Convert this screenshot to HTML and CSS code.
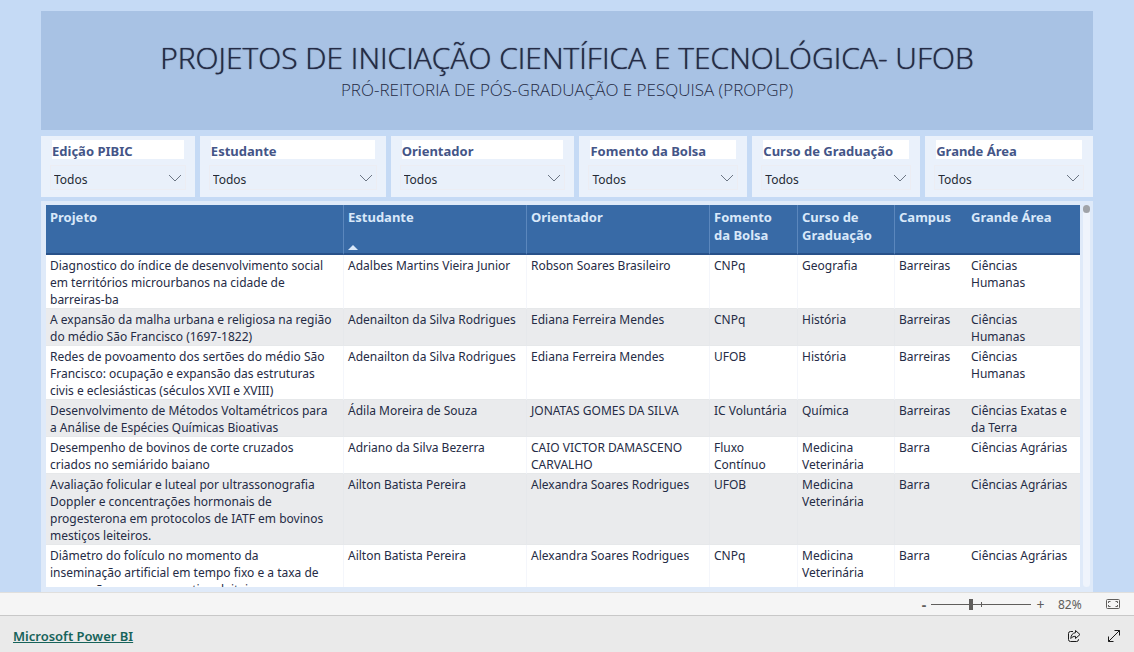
FILE: index.html
```html
<!DOCTYPE html>
<html lang="pt-BR">
<head>
<meta charset="utf-8">
<title>Projetos de Iniciação Científica e Tecnológica - UFOB</title>
<link rel="stylesheet" href="styles.css">
</head>
<body>
<main class="report">
  <header class="banner">
    <h1 class="banner-title">PROJETOS DE INICIAÇÃO CIENTÍFICA E TECNOLÓGICA- UFOB</h1>
    <p class="banner-subtitle">PRÓ-REITORIA DE PÓS-GRADUAÇÃO E PESQUISA (PROPGP)</p>
  </header>

  <section class="slicers">
    <div class="slicer slicer-edicao">
      <label class="slicer-label" for="f-edicao">Edição PIBIC</label>
      <div class="slicer-field"><select class="slicer-select" id="f-edicao"><option>Todos</option></select><svg class="chevron" viewBox="0 0 14 8"><path d="M1 1l6 6 6-6"/></svg></div>
    </div>
    <div class="slicer slicer-estudante">
      <label class="slicer-label" for="f-estudante">Estudante</label>
      <div class="slicer-field"><select class="slicer-select" id="f-estudante"><option>Todos</option></select><svg class="chevron" viewBox="0 0 14 8"><path d="M1 1l6 6 6-6"/></svg></div>
    </div>
    <div class="slicer slicer-orientador">
      <label class="slicer-label" for="f-orientador">Orientador</label>
      <div class="slicer-field"><select class="slicer-select" id="f-orientador"><option>Todos</option></select><svg class="chevron" viewBox="0 0 14 8"><path d="M1 1l6 6 6-6"/></svg></div>
    </div>
    <div class="slicer slicer-fomento">
      <label class="slicer-label" for="f-fomento">Fomento da Bolsa</label>
      <div class="slicer-field"><select class="slicer-select" id="f-fomento"><option>Todos</option></select><svg class="chevron" viewBox="0 0 14 8"><path d="M1 1l6 6 6-6"/></svg></div>
    </div>
    <div class="slicer slicer-curso">
      <label class="slicer-label" for="f-curso">Curso de Graduação</label>
      <div class="slicer-field"><select class="slicer-select" id="f-curso"><option>Todos</option></select><svg class="chevron" viewBox="0 0 14 8"><path d="M1 1l6 6 6-6"/></svg></div>
    </div>
    <div class="slicer slicer-area">
      <label class="slicer-label" for="f-area">Grande Área</label>
      <div class="slicer-field"><select class="slicer-select" id="f-area"><option>Todos</option></select><svg class="chevron" viewBox="0 0 14 8"><path d="M1 1l6 6 6-6"/></svg></div>
    </div>
  </section>

  <section class="table-panel">
    <div class="table-scroll">
      <table class="projects">
        <colgroup>
          <col class="col-projeto"><col class="col-pessoa"><col class="col-pessoa"><col class="col-fomento"><col class="col-curso"><col class="col-campus"><col class="col-area">
        </colgroup>
        <thead>
          <tr>
            <th>Projeto</th>
            <th aria-sort="ascending"><div class="sorted">Estudante<svg class="sort-arrow" viewBox="0 0 10 5"><path d="M0 5l5-5 5 5z"/></svg></div></th>
            <th>Orientador</th>
            <th>Fomento<br>da Bolsa</th>
            <th>Curso de Graduação</th>
            <th>Campus</th>
            <th>Grande Área</th>
          </tr>
        </thead>
        <tbody>
          <tr><td>Diagnostico do índice de desenvolvimento social<br>em territórios microurbanos na cidade de<br>barreiras-ba</td><td>Adalbes Martins Vieira Junior</td><td>Robson Soares Brasileiro</td><td>CNPq</td><td>Geografia</td><td>Barreiras</td><td>Ciências<br>Humanas</td></tr>
          <tr><td>A expansão da malha urbana e religiosa na região<br>do médio São Francisco (1697-1822)</td><td>Adenailton da Silva Rodrigues</td><td>Ediana Ferreira Mendes</td><td>CNPq</td><td>História</td><td>Barreiras</td><td>Ciências<br>Humanas</td></tr>
          <tr><td>Redes de povoamento dos sertões do médio São<br>Francisco: ocupação e expansão das estruturas<br>civis e eclesiásticas (séculos XVII e XVIII)</td><td>Adenailton da Silva Rodrigues</td><td>Ediana Ferreira Mendes</td><td>UFOB</td><td>História</td><td>Barreiras</td><td>Ciências<br>Humanas</td></tr>
          <tr><td>Desenvolvimento de Métodos Voltamétricos para<br>a Análise de Espécies Químicas Bioativas</td><td>Ádila Moreira de Souza</td><td>JONATAS GOMES DA SILVA</td><td>IC Voluntária</td><td>Química</td><td>Barreiras</td><td>Ciências Exatas e<br>da Terra</td></tr>
          <tr><td>Desempenho de bovinos de corte cruzados<br>criados no semiárido baiano</td><td>Adriano da Silva Bezerra</td><td>CAIO VICTOR DAMASCENO<br>CARVALHO</td><td>Fluxo<br>Contínuo</td><td>Medicina<br>Veterinária</td><td>Barra</td><td>Ciências Agrárias</td></tr>
          <tr><td>Avaliação folicular e luteal por ultrassonografia<br>Doppler e concentrações hormonais de<br>progesterona em protocolos de IATF em bovinos<br>mestiços leiteiros.</td><td>Ailton Batista Pereira</td><td>Alexandra Soares Rodrigues</td><td>UFOB</td><td>Medicina<br>Veterinária</td><td>Barra</td><td>Ciências Agrárias</td></tr>
          <tr><td>Diâmetro do folículo no momento da<br>inseminação artificial em tempo fixo e a taxa de<br>concepção em vacas mestiças leiteiras</td><td>Ailton Batista Pereira</td><td>Alexandra Soares Rodrigues</td><td>CNPq</td><td>Medicina<br>Veterinária</td><td>Barra</td><td>Ciências Agrárias</td></tr>
        </tbody>
      </table>
    </div>
    <div class="scroll-track"><div class="scroll-thumb"></div></div>
  </section>
</main>

<div class="zoom-bar">
  <button class="zoom-button zoom-out" aria-label="Reduzir">-</button>
  <input class="zoom-range" type="range" min="0" max="100" value="40" aria-label="Zoom">
  <button class="zoom-button zoom-in" aria-label="Ampliar">+</button>
  <span class="zoom-value">82%</span>
  <button class="icon-button" aria-label="Ajustar à página"><svg class="icon-fit" viewBox="0 0 14 10"><rect x=".5" y=".5" width="13" height="9" rx="1"/><path d="M4.500 2.500h-2v1.500M2.500 6v1.500h2M9.500 2.500h2v1.500M11.500 6v1.500h-2"/></svg></button>
</div>
<footer class="footer">
  <a class="brand" href="#">Microsoft Power BI</a>
  <div class="footer-actions">
    <button class="icon-button" aria-label="Compartilhar"><svg class="icon-share" viewBox="0 0 14 14"><path d="M6 2.500H3.500a2 2 0 0 0-2 2v6a2 2 0 0 0 2 2h6a2 2 0 0 0 2-2V10"/><path d="M8.500 1.500l4.500 4-4.500 4V7.300C6.500 7.300 5 8 3.800 9.500 4 6 5.700 4 8.500 3.700z"/></svg></button>
    <button class="icon-button" aria-label="Tela inteira"><svg class="icon-expand" viewBox="0 0 14 14"><path d="M1.500 12.500l11-11M7.500 1.500h5V6.500M1.500 7.500v5H6.500"/></svg></button>
  </div>
</footer>
</body>
</html>
```
FILE: styles.css
```css
* { box-sizing: border-box; }

body {
  margin: 0;
  height: 100vh;
  display: flex;
  flex-direction: column;
  overflow: hidden;
  background: #eaeaea;
  color: #252b45;
  font-family: "Noto Sans", "Open Sans", sans-serif;
  font-size: 12px;
  line-height: 17px;
}

button {
  padding: 0;
  border: 0;
  background: none;
  color: inherit;
  font: inherit;
}

svg { display: block; fill: none; }

.report {
  flex: 1;
  min-height: 0;
  display: flex;
  flex-direction: column;
  padding: 11px 41px 0;
  background: #c5daf5;
}

.banner {
  padding: 27px 0 29px;
  background: #a8c2e4;
  font-family: "Open Sans", "Noto Sans", sans-serif;
  text-align: center;
}

.banner-title {
  margin: 0;
  font-size: 30px;
  font-weight: 300;
  line-height: 40px;
  text-shadow: 0 0 1px #252b45;
}

.banner-subtitle {
  margin: 0;
  font-size: 17px;
  font-weight: 300;
  line-height: 23px;
}

.slicers {
  display: flex;
  gap: 5px;
  padding: 6px 0 4px;
}

.slicer {
  flex: 150 1 0;
  min-width: 0;
  padding: 4px 9px 7px;
  background: #eaf1fb;
}

.slicer-edicao { flex-grow: 136; }
.slicer-estudante { flex-grow: 168; }
.slicer-orientador { flex-grow: 166; }

.slicer-label {
  display: block;
  margin: 0 2px 6px;
  padding-top: 4px;
  background: #fff;
  color: #445587;
  font-size: 13px;
  font-weight: 700;
  line-height: 15px;
  white-space: nowrap;
}

.slicer-field { position: relative; }

.slicer-select {
  display: block;
  width: 100%;
  height: 25px;
  padding: 4px 3px 0;
  border: 1px solid #ecedf3;
  border-radius: 0;
  background: #e9f0fa;
  appearance: none;
  color: #252b35;
  font: inherit;
}

.chevron {
  position: absolute;
  top: 9px;
  right: 4px;
  width: 14px;
  height: 8px;
  stroke: #6c7684;
  pointer-events: none;
}

.table-panel {
  flex: 1;
  min-height: 0;
  display: flex;
  gap: 3px;
  padding: 4px 3px 5px 5px;
  background: #dfeaf9;
}

.table-scroll {
  flex: 1;
  overflow: hidden;
  background: #fff;
}

.projects {
  width: 100%;
  border-collapse: separate;
  border-spacing: 0;
  table-layout: fixed;
}

.col-projeto { width: 298px; }
.col-pessoa { width: 183px; }
.col-fomento { width: 88px; }
.col-curso { width: 97px; }
.col-campus { width: 72px; }
.col-area { width: 114px; }

.projects th {
  height: 50px;
  padding: 3px 4px;
  border-right: 1px solid #5b87bd;
  border-bottom: 2px solid #285189;
  background: #386aa6;
  color: #d9e8f9;
  font-size: 13px;
  font-weight: 700;
  line-height: 18px;
  text-align: left;
  vertical-align: top;
}

.projects td {
  padding: 2px 0 0 4px;
  border-right: 1px solid #f4f6fb;
  border-bottom: 1px solid #e6e8ea;
  vertical-align: top;
  white-space: nowrap;
}

.projects tr :nth-child(n+6) { border-right: 0; }
.projects tbody tr:nth-child(even) { background: #eaebed; }
.projects tbody tr:nth-child(even) td { border-right-color: #e6e8eb; }

.sorted {
  height: 42px;
  display: flex;
  flex-direction: column;
  justify-content: space-between;
}

.sort-arrow {
  width: 10px;
  height: 5px;
  fill: #d9e8f9;
}

.scroll-track {
  width: 7px;
  border-radius: 4px;
  background: #eff4fc;
}

.scroll-thumb {
  width: 7px;
  height: 8px;
  border-radius: 4px;
  background: #a0a3a8;
}

.zoom-bar {
  height: 24px;
  display: flex;
  align-items: center;
  justify-content: flex-end;
  padding-right: 14px;
  border-top: 1px solid #e0dfdd;
  border-bottom: 1px solid #c8c8c8;
  background: #f5f5f5;
  color: #605e5c;
}

.zoom-button { width: 14px; font-size: 14px; }
.zoom-out { font-weight: 700; }
.zoom-in { width: 19px; }

.zoom-range {
  width: 100px;
  height: 12px;
  margin: 0;
  appearance: none;
  background:
    linear-gradient(#605e5c, #605e5c) 50% 50% / 1px 5px no-repeat,
    linear-gradient(#605e5c, #605e5c) 50% 50% / 100% 1px no-repeat;
}

.zoom-range::-webkit-slider-thumb {
  width: 4px;
  height: 11px;
  appearance: none;
  background: #605e5c;
}

.zoom-value { width: 36px; margin: 0 12px 0 8px; }

.footer {
  height: 36px;
  display: flex;
  align-items: center;
  justify-content: space-between;
  padding: 4px 13px 0;
}

.brand {
  color: #17635a;
  font-size: 13px;
  font-weight: 600;
}

.footer-actions { display: flex; gap: 26px; }

.icon-fit { width: 14px; height: 10px; stroke: #605e5c; }
.icon-share, .icon-expand { width: 14px; height: 14px; stroke: #1b1b1b; }
```
